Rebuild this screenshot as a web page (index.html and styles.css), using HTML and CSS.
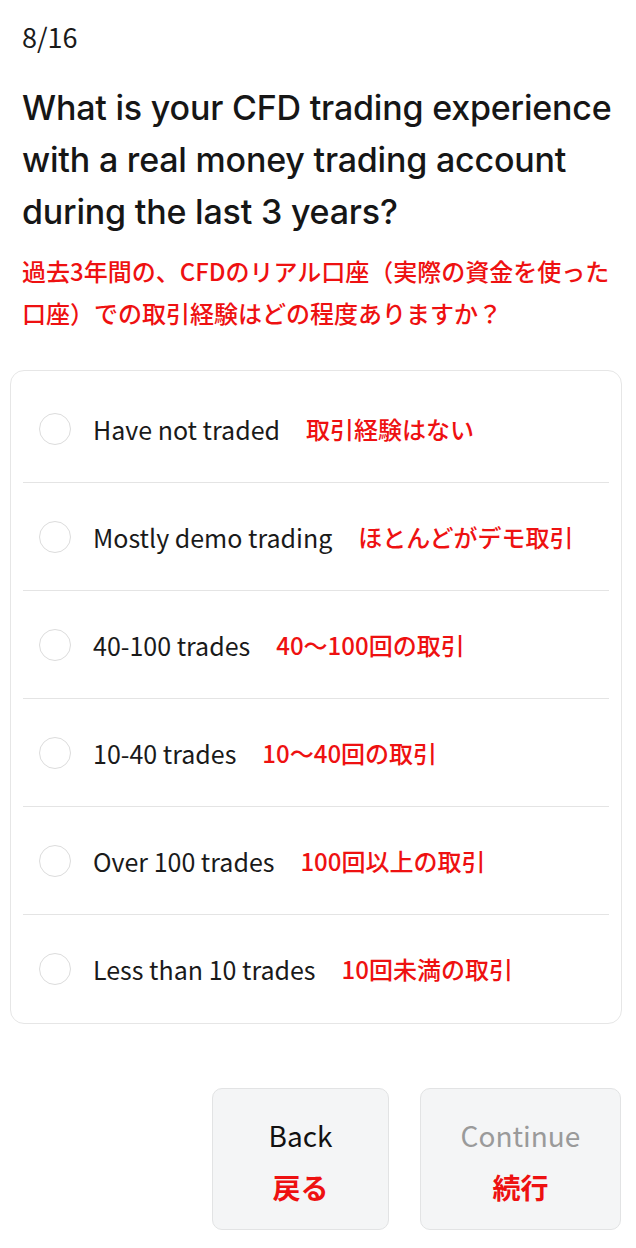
FILE: index.html
```html
<!DOCTYPE html>
<html lang="ja">
<head>
    <meta charset="UTF-8">
    <meta name="viewport" content="width=device-width, initial-scale=1.0">
    <title>Trading experience 8/16</title>
    <link rel="stylesheet" href="styles.css">
</head>
<body>
    <div class="page">
        <div class="step">8/16</div>

        <h1 class="question">What is your CFD trading experience with a real money trading account during the last 3 years?</h1>
        <p class="question-ja">過去3年間の、CFDのリアル口座（実際の資金を使った口座）での取引経験はどの程度ありますか？</p>

        <ul class="options">
            <li class="option">
                <span class="radio"></span>
                <span class="label">Have not traded</span>
                <span class="label-ja">取引経験はない</span>
            </li>
            <li class="option">
                <span class="radio"></span>
                <span class="label">Mostly demo trading</span>
                <span class="label-ja">ほとんどがデモ取引</span>
            </li>
            <li class="option">
                <span class="radio"></span>
                <span class="label">40-100 trades</span>
                <span class="label-ja">40～100回の取引</span>
            </li>
            <li class="option">
                <span class="radio"></span>
                <span class="label">10-40 trades</span>
                <span class="label-ja">10～40回の取引</span>
            </li>
            <li class="option">
                <span class="radio"></span>
                <span class="label">Over 100 trades</span>
                <span class="label-ja">100回以上の取引</span>
            </li>
            <li class="option">
                <span class="radio"></span>
                <span class="label">Less than 10 trades</span>
                <span class="label-ja">10回未満の取引</span>
            </li>
        </ul>

        <div class="actions">
            <button class="btn btn-back">
                <span class="btn-text">Back</span>
                <span class="btn-ja">戻る</span>
            </button>
            <button class="btn btn-continue" disabled>
                <span class="btn-text">Continue</span>
                <span class="btn-ja">続行</span>
            </button>
        </div>
    </div>
</body>
</html>
```

FILE: styles.css
```css
body {
    margin: 0;
    background: #fff;
    color: #1a1a1a;
    font-family: "Noto Sans CJK JP", "Noto Sans", sans-serif;
}
.page {
    padding: 21px 14px 0 10px;
}
.step {
    padding-left: 12px;
    font-size: 27px;
    line-height: 31px;
    color: #1a1a1a;
}
.question {
    margin: 30px 0 0;
    padding-left: 12px;
    font-family: Inter, "Noto Sans", sans-serif;
    font-size: 34px;
    font-weight: 500;
    line-height: 52px;
    letter-spacing: -0.2px;
    color: #161616;
}
.question-ja {
    margin: 12px 0 0;
    padding-left: 12px;
    font-size: 24px;
    font-weight: 500;
    line-height: 42px;
    color: #ee1111;
}
.options {
    list-style: none;
    margin: 36px 0 0;
    padding: 4px 0 1px;
    border: 1px solid #e6e6e6;
    border-radius: 14px;
}
.option {
    display: flex;
    align-items: center;
    height: 107px;
    margin: 0 12px;
    padding-left: 16px;
}
.option + .option {
    border-top: 1px solid #e4e4e4;
}
.radio {
    flex: 0 0 auto;
    width: 30px;
    height: 30px;
    border: 1.5px solid #dcdcdc;
    border-radius: 50%;
    margin-right: 22px;
}
.label {
    font-size: 25px;
    color: #1a1a1a;
}
.label-ja {
    margin-left: 26px;
    font-size: 24px;
    font-weight: 500;
    color: #ee1111;
}
.actions {
    display: flex;
    justify-content: flex-end;
    gap: 31px;
    margin-top: 64px;
    padding-right: 1px;
}
.btn {
    display: flex;
    flex-direction: column;
    align-items: center;
    justify-content: center;
    height: 142px;
    padding: 4px 0 0;
    background: #f4f5f6;
    border: 1px solid #e2e3e4;
    border-radius: 10px;
    font-family: inherit;
}
.btn-back {
    width: 177px;
}
.btn-continue {
    width: 201px;
}
.btn-text {
    font-size: 28px;
    line-height: 52px;
    color: #111;
}
.btn-continue .btn-text {
    color: #9a9a9a;
}
.btn-ja {
    font-size: 28px;
    font-weight: 700;
    line-height: 52px;
    color: #ee1111;
}
```
